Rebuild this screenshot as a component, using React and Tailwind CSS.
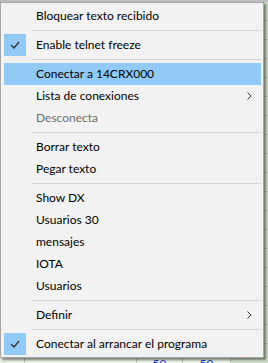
import React from 'react'

const items = [
  { label: 'Bloquear texto recibido' },
  { sep: true },
  { label: 'Enable telnet freeze', checked: true },
  { sep: true },
  { label: 'Conectar a 14CRX000', active: true },
  { label: 'Lista de conexiones', sub: true },
  { label: 'Desconecta', disabled: true },
  { sep: true },
  { label: 'Borrar texto' },
  { label: 'Pegar texto' },
  { sep: true },
  { label: 'Show DX' },
  { label: 'Usuarios 30' },
  { label: 'mensajes' },
  { label: 'IOTA' },
  { label: 'Usuarios' },
  { sep: true },
  { label: 'Definir', sub: true },
  { sep: true },
  { label: 'Conectar al arrancar el programa', checked: true },
]

function Check() {
  return (
    <svg width="10" height="8" viewBox="0 0 10 8" fill="none">
      <path d="M1 4l3 3 5-6" stroke="#333" strokeWidth="1.4" />
    </svg>
  )
}

function Chevron() {
  return (
    <svg width="5" height="8" viewBox="0 0 5 8" fill="none">
      <path d="M0.5 0.5l3.5 3.5-3.5 3.5" stroke="#333" strokeWidth="1" />
    </svg>
  )
}

const rows = Array.from({ length: 18 })

export default function App() {
  return (
    <div className="relative w-[268px] h-[363px] overflow-hidden bg-[#e6eee2] font-['Lato',sans-serif]">
      {/* grid behind the menu */}
      <div className="absolute inset-0 flex flex-col">
        <div className="h-[2px] bg-[#bdbdbd] shrink-0" />
        {rows.map((_, i) => (
          <div key={i} className="h-[19px] flex border-b border-[#b9c2b5] shrink-0">
            <div className="w-[25px] border-r border-[#b9c2b5]" />
            <div className="w-[112px] border-r border-[#b9c2b5]" />
            <div className="w-[46px] border-r border-[#b9c2b5]" />
            <div className="w-[48px] border-r border-[#b9c2b5]" />
            <div className="flex-1 bg-[#cfdcc8]" />
          </div>
        ))}
        <div className="flex h-[20px] shrink-0">
          <div className="w-[25px] border-r border-[#b9c2b5]" />
          <div className="w-[112px] border-r border-[#b9c2b5]" />
          <div className="w-[46px] border-r border-[#b9c2b5] text-[12px] text-[#1d3bd6] text-center pt-[14px] leading-[12px]">59</div>
          <div className="w-[48px] border-r border-[#b9c2b5] text-[12px] text-[#1d3bd6] text-center pt-[14px] leading-[12px]">59</div>
          <div className="flex-1 bg-[#cfdcc8]" />
        </div>
      </div>

      {/* context menu */}
      <div className="absolute left-0 top-[2px] w-[264px] bg-[#f2f2f2] border border-[#a6a6a6] pl-[3px] pr-[2px] py-[2px] shadow-[2px_2px_2px_rgba(0,0,0,0.45)]">
        {items.map((it, i) =>
          it.sep ? (
            <div key={i} className="h-[7px] flex items-center pl-[28px]">
              <div className="h-px w-full bg-[#d4d4d4]" />
            </div>
          ) : (
            <div
              key={i}
              className={`relative h-[22px] flex items-center pl-[32px] text-[12px] ${
                it.active ? 'bg-[#91c9f7]' : ''
              } ${it.disabled ? 'text-[#6d6d6d]' : 'text-black'}`}
            >
              {it.checked && (
                <div className="absolute left-0 top-0 w-[22px] h-[22px] bg-[#91c9f7] flex items-center justify-center">
                  <Check />
                </div>
              )}
              <span className="whitespace-nowrap">{it.label}</span>
              {it.sub && (
                <div className="absolute right-[9px] top-[7px]">
                  <Chevron />
                </div>
              )}
            </div>
          )
        )}
      </div>
    </div>
  )
}
